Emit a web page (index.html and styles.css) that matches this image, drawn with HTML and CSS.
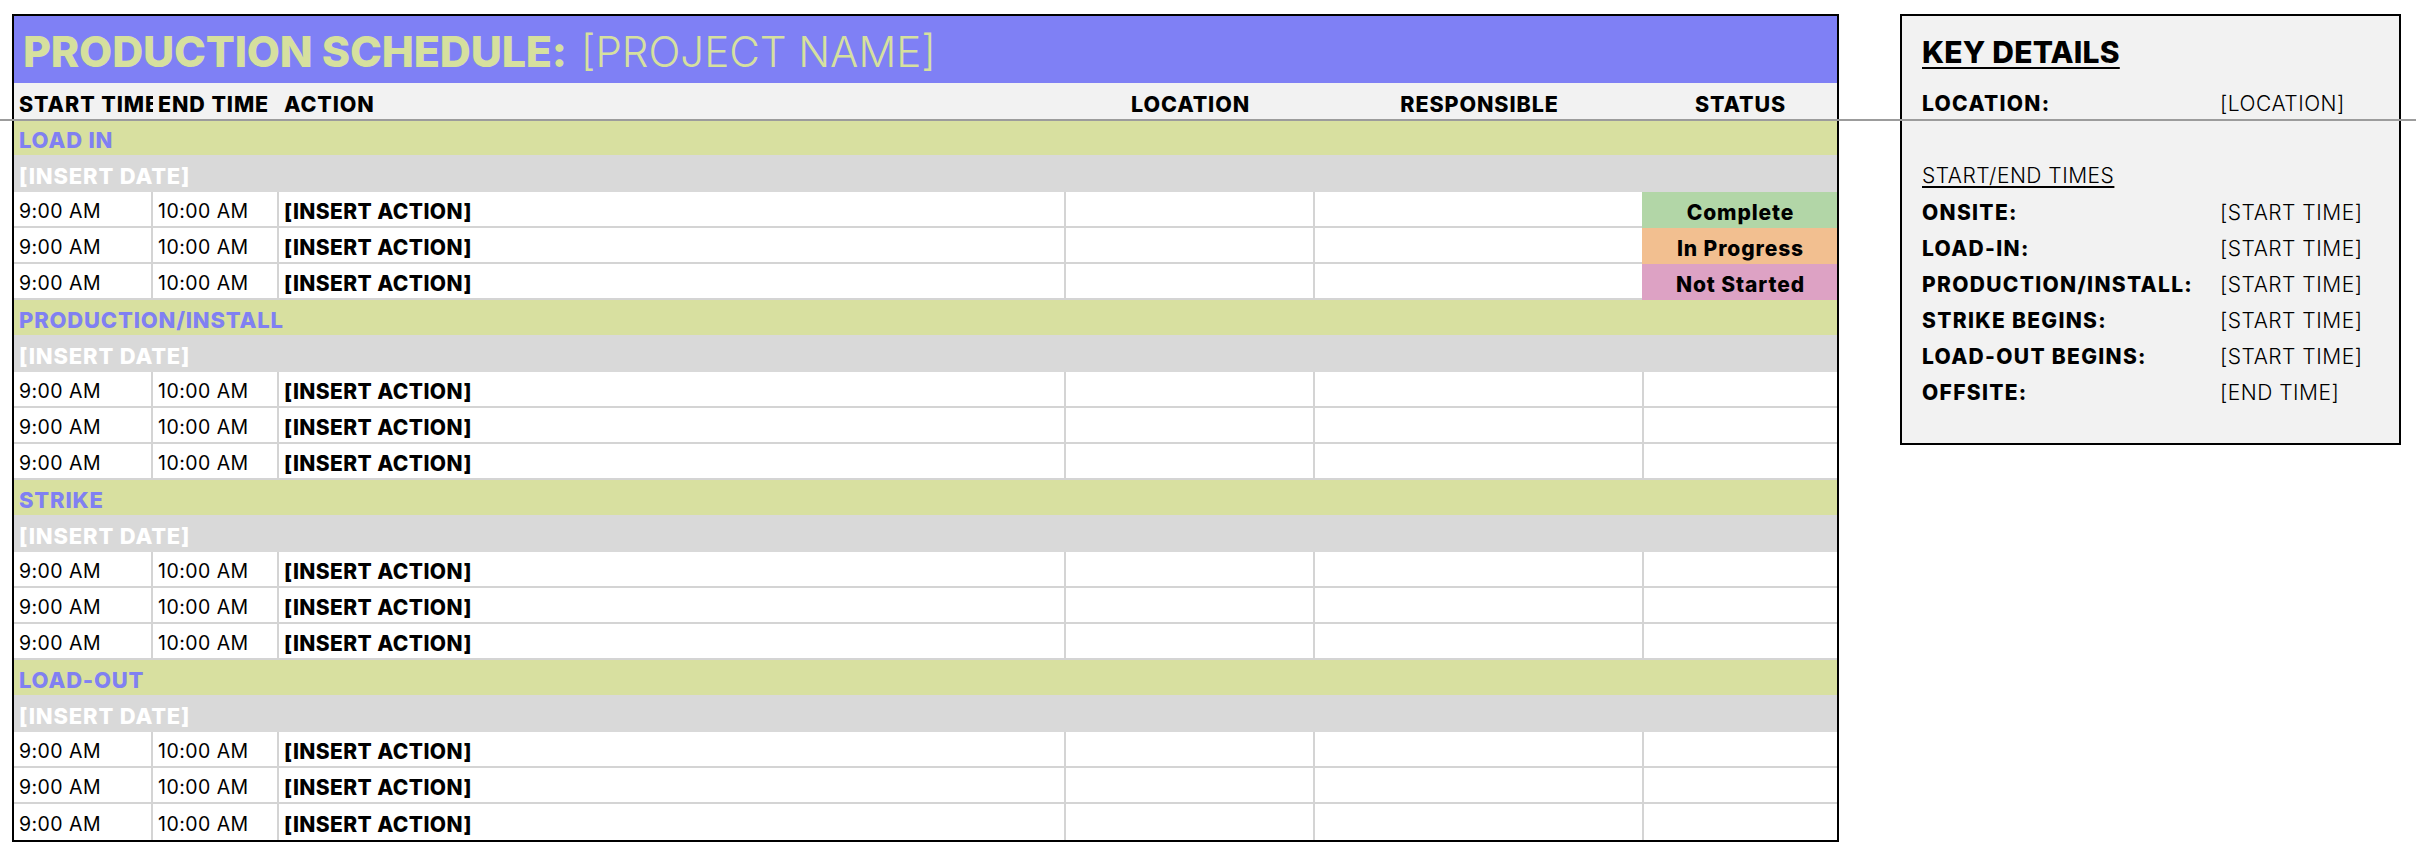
FILE: index.html
```html
<!DOCTYPE html>
<html lang="en">
<head>
<meta charset="utf-8">
<title>Production Schedule</title>
<link rel="stylesheet" href="styles.css">
</head>
<body>
<div class="page">
  <section class="sheet">
    <div class="title"><span class="title-bold">PRODUCTION SCHEDULE:</span><span class="title-light">[PROJECT NAME]</span></div>
    <div class="grid">
      <div class="row">
        <div class="hd">START TIME</div>
        <div class="hd">END TIME</div>
        <div class="hd">ACTION</div>
        <div class="hd hd-c">LOCATION</div>
        <div class="hd hd-c">RESPONSIBLE</div>
        <div class="hd hd-c">STATUS</div>
      </div>

      <div class="sec">LOAD IN</div>
      <div class="date">[INSERT DATE]</div>
      <div class="row"><div class="c">9:00 AM</div><div class="c">10:00 AM</div><div class="c act">[INSERT ACTION]</div><div class="c"></div><div class="c"></div><div class="c st st-complete">Complete</div></div>
      <div class="row"><div class="c">9:00 AM</div><div class="c">10:00 AM</div><div class="c act">[INSERT ACTION]</div><div class="c"></div><div class="c"></div><div class="c st st-progress">In Progress</div></div>
      <div class="row"><div class="c">9:00 AM</div><div class="c">10:00 AM</div><div class="c act">[INSERT ACTION]</div><div class="c"></div><div class="c"></div><div class="c st st-not">Not Started</div></div>

      <div class="sec">PRODUCTION/INSTALL</div>
      <div class="date">[INSERT DATE]</div>
      <div class="row"><div class="c">9:00 AM</div><div class="c">10:00 AM</div><div class="c act">[INSERT ACTION]</div><div class="c"></div><div class="c"></div><div class="c"></div></div>
      <div class="row"><div class="c">9:00 AM</div><div class="c">10:00 AM</div><div class="c act">[INSERT ACTION]</div><div class="c"></div><div class="c"></div><div class="c"></div></div>
      <div class="row"><div class="c">9:00 AM</div><div class="c">10:00 AM</div><div class="c act">[INSERT ACTION]</div><div class="c"></div><div class="c"></div><div class="c"></div></div>

      <div class="sec">STRIKE</div>
      <div class="date">[INSERT DATE]</div>
      <div class="row"><div class="c">9:00 AM</div><div class="c">10:00 AM</div><div class="c act">[INSERT ACTION]</div><div class="c"></div><div class="c"></div><div class="c"></div></div>
      <div class="row"><div class="c">9:00 AM</div><div class="c">10:00 AM</div><div class="c act">[INSERT ACTION]</div><div class="c"></div><div class="c"></div><div class="c"></div></div>
      <div class="row"><div class="c">9:00 AM</div><div class="c">10:00 AM</div><div class="c act">[INSERT ACTION]</div><div class="c"></div><div class="c"></div><div class="c"></div></div>

      <div class="sec">LOAD-OUT</div>
      <div class="date">[INSERT DATE]</div>
      <div class="row"><div class="c">9:00 AM</div><div class="c">10:00 AM</div><div class="c act">[INSERT ACTION]</div><div class="c"></div><div class="c"></div><div class="c"></div></div>
      <div class="row"><div class="c">9:00 AM</div><div class="c">10:00 AM</div><div class="c act">[INSERT ACTION]</div><div class="c"></div><div class="c"></div><div class="c"></div></div>
      <div class="row row-last"><div class="c">9:00 AM</div><div class="c">10:00 AM</div><div class="c act">[INSERT ACTION]</div><div class="c"></div><div class="c"></div><div class="c"></div></div>
    </div>
  </section>

  <aside class="key">
    <div class="key-title"><span>KEY DETAILS</span></div>
    <div class="key-row key-first"><span class="lbl">LOCATION:</span><span class="val">[LOCATION]</span></div>
    <div class="key-gap"></div>
    <div class="key-row key-sub"><span class="sub">START/END TIMES</span></div>
    <div class="key-row"><span class="lbl">ONSITE:</span><span class="val">[START TIME]</span></div>
    <div class="key-row"><span class="lbl">LOAD-IN:</span><span class="val">[START TIME]</span></div>
    <div class="key-row"><span class="lbl">PRODUCTION/INSTALL:</span><span class="val">[START TIME]</span></div>
    <div class="key-row"><span class="lbl">STRIKE BEGINS:</span><span class="val">[START TIME]</span></div>
    <div class="key-row"><span class="lbl">LOAD-OUT BEGINS:</span><span class="val">[START TIME]</span></div>
    <div class="key-row"><span class="lbl">OFFSITE:</span><span class="val">[END TIME]</span></div>
  </aside>
</div>
<div class="freeze-line"></div>
</body>
</html>
```
FILE: styles.css
```css
* { box-sizing: border-box; }

html, body {
  margin: 0;
  padding: 0;
  background: #ffffff;
}

body {
  font-family: Inter, "Noto Sans", "DejaVu Sans", sans-serif;
  color: #000;
  width: 2416px;
  height: 858px;
  position: relative;
  overflow: hidden;
}

.page {
  display: flex;
  align-items: flex-start;
  gap: 61px;
  padding: 14px 0 0 12px;
}

/* ---------- schedule sheet ---------- */
.sheet {
  width: 1827px;
  border: 2px solid #000;
  background: #fff;
}

.title {
  height: 67px;
  background: #7f80f5;
  color: #d6e09e;
  display: flex;
  align-items: center;
  padding: 4px 0 0 9px;
  line-height: 1;
  white-space: nowrap;
}

.title-bold {
  font-size: 43px;
  font-weight: 800;
  letter-spacing: -0.2px;
}

.title-light {
  font-size: 42px;
  font-weight: 300;
  letter-spacing: 0;
  margin-left: 14px;
}

.grid {
  display: grid;
  grid-template-columns: 139px 126px 787px 249px 329px 193px;
}

.row { display: contents; }

.hd {
  height: 37px;
  background: #f2f2f2;
  font-weight: 800;
  font-size: 21.5px;
  letter-spacing: 0.9px;
  display: flex;
  align-items: center;
  padding: 4px 0 0 5px;
  white-space: nowrap;
  overflow: hidden;
}

.hd-c {
  justify-content: center;
  padding-left: 0;
}

.sec {
  grid-column: 1 / -1;
  height: 35px;
  background: #d8e0a0;
  color: #8080f2;
  font-weight: 800;
  font-size: 22px;
  letter-spacing: 0.8px;
  display: flex;
  align-items: center;
  padding: 4px 0 0 5px;
}

.date {
  grid-column: 1 / -1;
  height: 37px;
  background: #d9d9d9;
  color: #ffffff;
  font-weight: 800;
  font-size: 22px;
  letter-spacing: 0.8px;
  display: flex;
  align-items: center;
  padding: 4px 0 0 5px;
}

.c {
  height: 36px;
  border-right: 2px solid #d4d4d4;
  border-bottom: 2px solid #d4d4d4;
  font-size: 19.5px;
  font-weight: 400;
  letter-spacing: 0.45px;
  display: flex;
  align-items: center;
  padding: 4px 0 0 5px;
  white-space: nowrap;
}

.row > .c:last-child {
  border-right: none;
}

.row-last > .c {
  border-bottom: none;
}

.act {
  font-weight: 800;
  font-size: 21px;
  letter-spacing: 0.4px;
}

.st {
  justify-content: center;
  padding-left: 0;
  font-weight: 800;
  font-size: 21px;
  letter-spacing: 0.9px;
  border-bottom: none;
  box-shadow: -2px 0 0 var(--st);
  background: var(--st);
}

.st-complete { --st: #b2d6a7; }
.st-progress { --st: #f2bf90; }
.st-not { --st: #dda2c4; }

/* ---------- key details ---------- */
.key {
  width: 501px;
  height: 431px;
  border: 2px solid #000;
  background: #f2f2f2;
  display: flex;
  flex-direction: column;
  padding-left: 20px;
}

.key-title {
  height: 67px;
  display: flex;
  align-items: center;
  padding-top: 4px;
  font-size: 30px;
  font-weight: 800;
  letter-spacing: 0.2px;
}

.key-title span {
  text-decoration: underline;
  text-decoration-thickness: 2px;
  text-underline-offset: 4px;
}

.key-row {
  height: 36px;
  display: grid;
  grid-template-columns: 298px 1fr;
  align-items: center;
  padding-top: 4px;
  font-size: 21px;
  white-space: nowrap;
}

.key-first { height: 37px; }
.key-gap { height: 35px; }
.key-sub { height: 37px; }

.lbl {
  font-weight: 800;
  letter-spacing: 1.3px;
}

.val {
  font-weight: 300;
  letter-spacing: 0.5px;
}

.sub {
  font-weight: 300;
  letter-spacing: 0.5px;
  text-decoration: underline;
  text-decoration-thickness: 1.5px;
  text-underline-offset: 3px;
}

/* Excel freeze-pane line lying over the sheet */
.freeze-line {
  position: absolute;
  left: 0;
  right: 0;
  top: 119px;
  height: 2px;
  background: #9c9c9c;
}
```
